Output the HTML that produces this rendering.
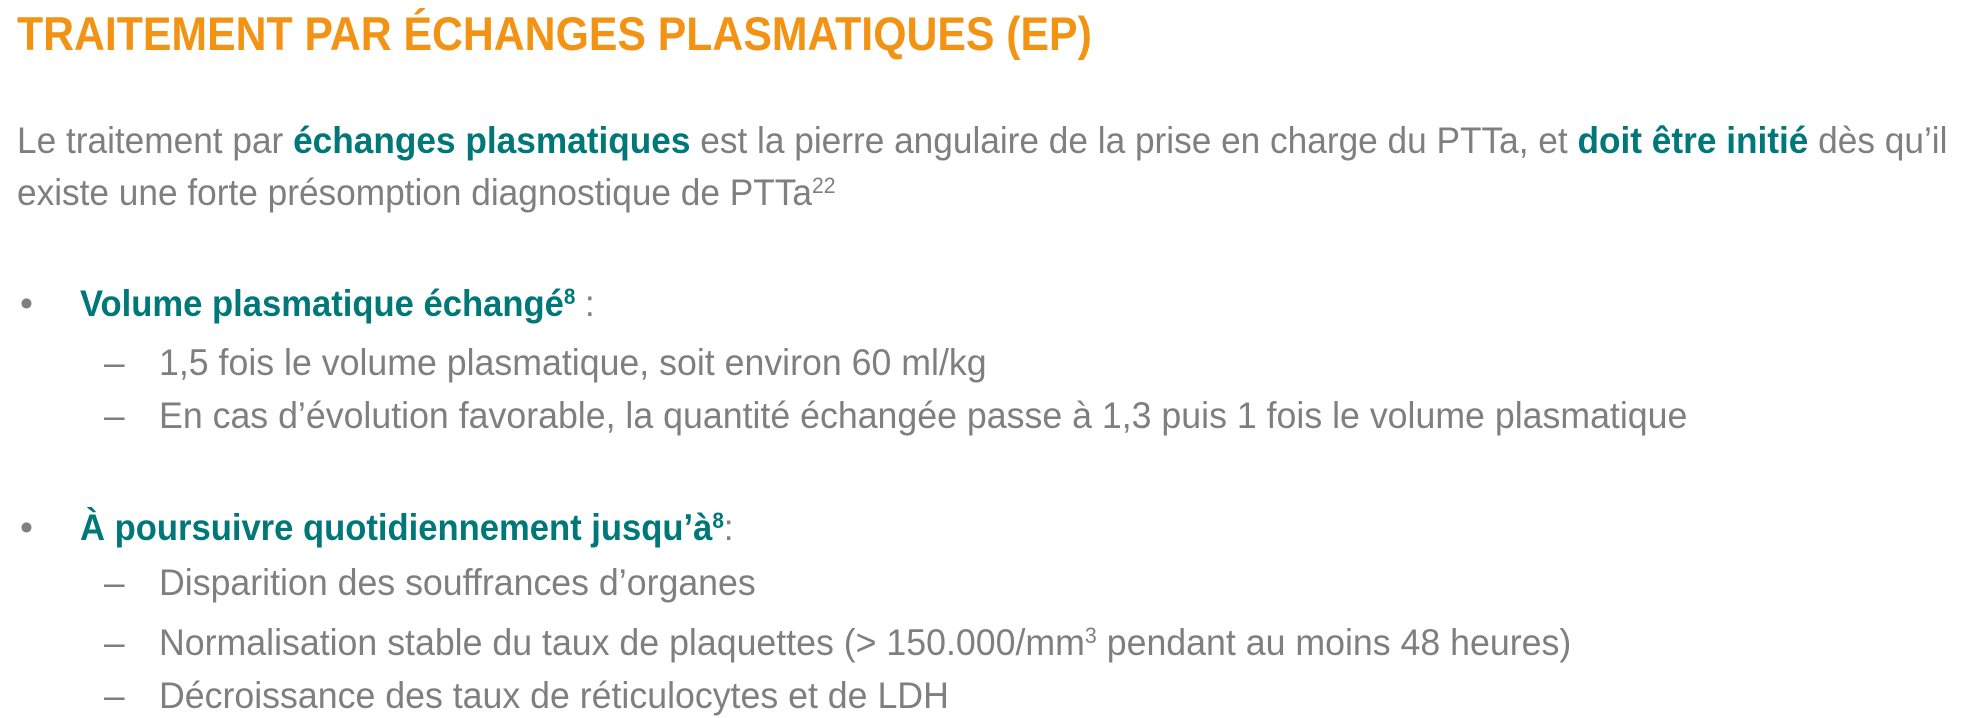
<!DOCTYPE html>
<html><head><meta charset="utf-8"><style>
html,body{margin:0;padding:0;background:#fff;width:1962px;height:718px;overflow:hidden;position:relative;font-family:"Liberation Sans",sans-serif}
.l{position:absolute;white-space:nowrap;line-height:1;transform-origin:0 0;color:#7f7f7f;font-size:37px}
.t{color:#f39314;font-weight:bold;font-size:47px;transform:scaleX(0.91)}
.b{color:#00787a;font-weight:bold}
.s{transform:scaleX(0.952)}
.u{transform:scaleX(0.965)}
.h{transform:scaleX(0.935)}
sup{font-size:60%;vertical-align:0;position:relative;top:-0.55em}
</style></head><body>
<div class="l t" style="left:17px;top:10px">TRAITEMENT PAR ÉCHANGES PLASMATIQUES (EP)</div>
<div class="l s" style="left:17px;top:122px">Le traitement par <span class="b">échanges plasmatiques</span> est la pierre angulaire de la prise en charge du PTTa, et <span class="b">doit être initié</span> dès qu’il</div>
<div class="l s" style="left:17px;top:174px">existe une forte présomption diagnostique de PTTa<sup>22</sup></div>
<div class="l" style="left:20px;top:285px">•</div>
<div class="l h" style="left:80px;top:285px"><span class="b">Volume plasmatique échangé<sup>8</sup></span> :</div>
<div class="l" style="left:104px;top:344px">–</div>
<div class="l u" style="left:159px;top:344px">1,5 fois le volume plasmatique, soit environ 60 ml/kg</div>
<div class="l" style="left:104px;top:397px">–</div>
<div class="l u" style="left:159px;top:397px">En cas d’évolution favorable, la quantité échangée passe à 1,3 puis 1 fois le volume plasmatique</div>
<div class="l" style="left:20px;top:509px">•</div>
<div class="l h" style="left:80px;top:509px"><span class="b">À poursuivre quotidiennement jusqu’à<sup>8</sup></span>:</div>
<div class="l" style="left:104px;top:564px">–</div>
<div class="l u" style="left:159px;top:564px">Disparition des souffrances d’organes</div>
<div class="l" style="left:104px;top:624px">–</div>
<div class="l u" style="left:159px;top:624px">Normalisation stable du taux de plaquettes (&gt; 150.000/mm<sup>3</sup> pendant au moins 48 heures)</div>
<div class="l" style="left:104px;top:677px">–</div>
<div class="l u" style="left:159px;top:677px">Décroissance des taux de réticulocytes et de LDH</div>
</body></html>
